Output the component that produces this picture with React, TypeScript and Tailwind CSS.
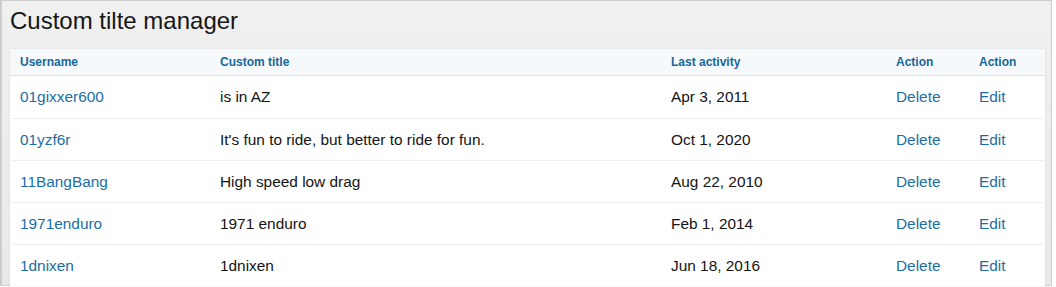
const rows = [
  { user: "01gixxer600", title: "is in AZ", last: "Apr 3, 2011" },
  { user: "01yzf6r", title: "It's fun to ride, but better to ride for fun.", last: "Oct 1, 2020" },
  { user: "11BangBang", title: "High speed low drag", last: "Aug 22, 2010" },
  { user: "1971enduro", title: "1971 enduro", last: "Feb 1, 2014" },
  { user: "1dnixen", title: "1dnixen", last: "Jun 18, 2016" },
];

const cols = "grid grid-cols-[200px_451px_225px_83px_1fr]";

const App = () => {
  return (
    <div className="w-[1056px] h-[287px] overflow-hidden bg-white font-['Liberation_Sans',Arial,sans-serif]">
      <div className="w-[1052px] h-[286px] border-l-2 border-t border-r border-b border-[#cdcdcd] bg-gradient-to-b from-[#f0f0f0] to-[#e9e9e9] pl-[8px] pr-[6px] pt-[5px]">
        <h1 className="text-[24px] leading-[30px] text-[#161616]">
          Custom tilte manager
        </h1>
        <div className="mt-[13px] bg-white shadow-[0_0_2px_rgba(0,0,0,0.08)]">
          <div
            className={`${cols} h-[27px] items-center bg-[#f6f9fc] border-b border-[#dde3e9] text-[12px] font-bold text-[#17679a] pl-[10px]`}
          >
            <span>Username</span>
            <span>Custom title</span>
            <span>Last activity</span>
            <span>Action</span>
            <span>Action</span>
          </div>
          <div className="px-[2px]">
            {rows.map((row, i) => (
              <div
                key={row.user}
                className={`${cols} h-[42px] items-center text-[15.4px] pl-[8px] ${
                  i > 0 ? "border-t border-[#ebedef]" : ""
                }`}
              >
                <a className="text-[#1c6ea4]">{row.user}</a>
                <span className="text-[#141414]">{row.title}</span>
                <span className="text-[#141414]">{row.last}</span>
                <a className="text-[#1c6ea4]">Delete</a>
                <a className="text-[#1c6ea4]">Edit</a>
              </div>
            ))}
          </div>
        </div>
      </div>
    </div>
  );
};

export default App;
